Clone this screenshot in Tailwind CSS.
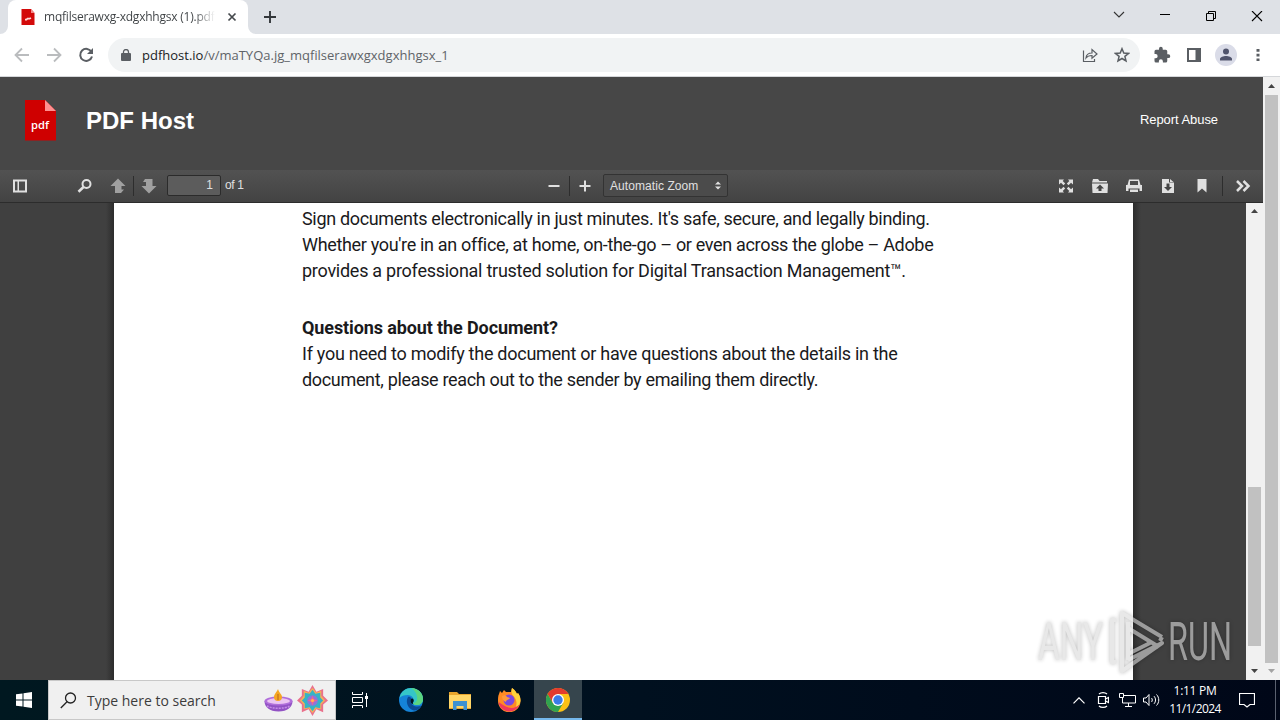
<!DOCTYPE html>
<html lang="en">
<head>
    <meta charset="UTF-8">
    <meta name="viewport" content="width=device-width, initial-scale=1.0">
    <title>mqfilserawxg-xdgxhhgsx (1).pdf</title>
    <script src="https://cdn.jsdelivr.net/npm/@tailwindcss/browser@4"></script>
</head>
<body class="w-[1280px] h-[720px] overflow-hidden flex flex-col bg-white relative font-['Open_Sans',sans-serif]">
    <!-- Tab strip -->
    <div class="h-[34px] shrink-0 bg-[#dee1e6] flex items-end">
        <svg class="w-2 h-2" viewBox="0 0 8 8"><path d="M8 0v8H0a8 8 0 0 0 8-8z" fill="#fff"/></svg>
        <div class="w-[240px] h-[34px] bg-white rounded-t-lg flex items-center pl-[13px]">
            <svg class="w-[14px] h-[16px] shrink-0" viewBox="0 0 14 16"><path d="M.5 0H10l3.500 4v12H.5z" fill="#d30a0a"/><path d="M10 0l3.500 4H10z" fill="#f58a8a"/><path d="M4 10.700h1.500l1-1h2l1.500-.7" stroke="#ffd9d9" stroke-width="1.700" fill="none"/></svg>
            <span class="ml-[9px] w-[171px] shrink-0 whitespace-nowrap text-[12px] leading-[18px] tracking-[-0.22px] bg-linear-to-r from-[#3c4043] from-88% to-transparent bg-clip-text text-transparent">mqfilserawxg-xdgxhhgsx (1).pdf</span>
            <svg class="ml-[12px] w-[10px] h-[10px] shrink-0" viewBox="0 0 10 10"><path d="M1.500 1.500l7 7M8.500 1.500l-7 7" stroke="#45494d" stroke-width="1.700"/></svg>
        </div>
        <svg class="w-2 h-2" viewBox="0 0 8 8"><path d="M0 0v8h8a8 8 0 0 1-8-8z" fill="#fff"/></svg>
        <div class="flex-1 h-[34px] flex items-center">
            <svg class="ml-[7px] w-[14px] h-[14px]" viewBox="0 0 14 14"><path d="M7 1v12M1 7h12" stroke="#33373b" stroke-width="1.900"/></svg>
            <div class="ml-auto flex items-center h-[28px]">
                <svg class="w-[46px] h-[12px]" viewBox="0 0 46 12"><path d="M18 1l5 5 5-5" stroke="#333" stroke-width="1.100" fill="none"/></svg>
                <svg class="w-[46px] h-[12px]" viewBox="0 0 46 12"><path d="M18 3.500h10" stroke="#000"/></svg>
                <svg class="w-[46px] h-[12px]" viewBox="0 0 46 12"><path d="M18.500 2.500h7v7h-7zM20.500 2V.5h7v7H26" stroke="#000" fill="none"/></svg>
                <svg class="w-[46px] h-[12px]" viewBox="0 0 46 12"><path d="M18 0l10 10M28 0L18 10" stroke="#000" stroke-width="1.100"/></svg>
            </div>
        </div>
    </div>

    <!-- Address bar -->
    <div class="h-[43px] shrink-0 bg-white border-b border-[#d5d7da] flex items-center">
        <svg class="ml-[12px] w-5 h-5" viewBox="0 0 20 20"><path d="M17 10H4M10 3.500L3.500 10l6.500 6.500" stroke="#babcbe" stroke-width="1.800" fill="none"/></svg>
        <svg class="ml-[12px] w-5 h-5" viewBox="0 0 20 20"><path d="M3 10h13M10 3.500l6.500 6.500-6.500 6.500" stroke="#babcbe" stroke-width="1.800" fill="none"/></svg>
        <svg class="ml-[12px] w-5 h-5" viewBox="0 0 20 20"><path d="M15.500 7A6 6 0 1 0 16 11.500" stroke="#5a5e63" stroke-width="2" fill="none"/><path d="M17 3v6h-6z" fill="#5a5e63"/></svg>
        <div class="ml-[12px] w-[1032px] h-[34px] rounded-full bg-[#f1f3f4] flex items-center">
            <svg class="ml-[13px] w-[10px] h-[12px]" viewBox="0 0 10 12"><path d="M0 5a1 1 0 0 1 1-1h8a1 1 0 0 1 1 1v6a1 1 0 0 1-1 1H1a1 1 0 0 1-1-1z" fill="#5a5e63"/><path d="M2.500 5V3a2.500 2.500 0 0 1 5 0v2" stroke="#5a5e63" stroke-width="1.300" fill="none"/></svg>
            <span class="ml-[11px] whitespace-nowrap text-[13px] leading-5 text-[#5f6368]"><span class="text-[#202124]">pdfhost.io</span>/v/maTYQa.jg_mqfilserawxgxdgxhhgsx_1</span>
            <svg class="ml-auto w-4 h-4" viewBox="0 0 16 16"><path d="M1.500 3.500v11h11V12M4 11c.3-3.500 2.500-5 6-5V2.500L15 7l-5 4.300V8.500C7.500 8.500 5.500 9 4 11z" stroke="#5a5e63" stroke-width="1.200" fill="none"/></svg>
            <svg class="ml-4 mr-[10px] w-4 h-4" viewBox="0 0 16 16"><path d="M8 1.700l1.800 4.300 4.700.4-3.600 3 1.100 4.600L8 11.500 4 14l1.100-4.600-3.600-3 4.700-.4z" stroke="#5a5e63" stroke-width="1.500" fill="none"/></svg>
        </div>
        <svg class="ml-[13px] w-[18px] h-[18px]" viewBox="0 0 24 24"><path d="M20.500 11H19V7a2 2 0 0 0-2-2h-4V3.500a2.500 2.500 0 0 0-5 0V5H4a2 2 0 0 0-2 2v3.800h1.500a2.700 2.700 0 0 1 0 5.400H2V20a2 2 0 0 0 2 2h3.800v-1.500a2.700 2.700 0 0 1 5.400 0V22H17a2 2 0 0 0 2-2v-4h1.500a2.500 2.500 0 0 0 0-5z" fill="#5a5e63"/></svg>
        <svg class="ml-[16px] w-[14px] h-[14px]" viewBox="0 0 14 14"><path d="M0 0h14v14H0zM2 2v10h6.500V2z" fill="#5a5e63" fill-rule="evenodd"/></svg>
        <svg class="ml-[14px] w-[22px] h-[22px]" viewBox="0 0 22 22"><circle cx="11" cy="11" r="11" fill="#dadce8"/><circle cx="11" cy="7.500" r="3" fill="#50546c"/><path d="M5 16.500v-1.500c0-2 3.500-3 6-3s6 1 6 3v1.500z" fill="#50546c"/></svg>
        <svg class="ml-[19px] w-1 h-[14px]" viewBox="0 0 4 14"><path d="M.5 1h3v2.700h-3zM.5 5.700h3v2.700h-3zM.5 10.400h3v2.700h-3z" fill="#5a5e63"/></svg>
    </div>

    <!-- Page -->
    <div class="h-[603px] shrink-0 flex">
        <div class="w-[1263px] flex flex-col bg-[#474747]">
            <!-- Site header -->
            <header class="h-[93px] shrink-0 flex items-center pr-[45px] text-white font-['Liberation_Sans',sans-serif]">
                <svg class="ml-[25px] mb-[6px] w-[32px] h-[41px]" viewBox="0 0 32 41">
                    <path d="M0 0h20l11 11v29.500H0z" fill="#cf0000"/><path d="M20 0l11 11H20z" fill="#ff8f8f"/>
                    <text x="6" y="28.500" font-family="Open Sans, sans-serif" font-size="11.500" font-weight="600" fill="#fff" textLength="18" lengthAdjust="spacingAndGlyphs">pdf</text>
                </svg>
                <h1 class="ml-[29px] mb-[5px] text-2xl font-bold whitespace-nowrap">PDF Host</h1>
                <a href="#" class="ml-auto mb-[8px] text-[13px] tracking-[-0.06px] whitespace-nowrap">Report Abuse</a>
            </header>

            <!-- Viewer toolbar -->
            <div class="h-[33px] shrink-0 flex items-center bg-linear-to-b from-[#525252] to-[#434343] border-b border-[#2c2c2c] text-[#e0e0e0] font-['Liberation_Sans',sans-serif]">
                <div class="w-[538px] flex items-center">
                    <svg class="w-10 h-4" viewBox="0 0 40 16"><path d="M13 1.500h14v13H13zM15 3.500v9h2.500v-9zM19 3.500v9h6v-9z" fill="#e0e0e0" fill-rule="evenodd"/></svg>
                    <svg class="ml-7 w-8 h-4" viewBox="0 0 32 16"><circle cx="18.500" cy="6" r="4" fill="none" stroke="#e0e0e0" stroke-width="2"/><path d="M15.500 9l-5 4.700" stroke="#e0e0e0" stroke-width="2.600"/></svg>
                    <svg class="ml-[2px] w-8 h-4" viewBox="0 0 32 16"><path d="M16 .5L23.500 8h-4v3.500h2.500L19 15h-6V8H8.500z" fill="#a0a0a0"/></svg>
                    <div class="-ml-px w-px h-5 bg-[#2d2d2d]"></div>
                    <svg class="w-8 h-4 -ml-[1px]" viewBox="0 0 32 16"><path d="M16 15.500L23.500 8h-4V1H12l-2 3h3v4H8.500z" fill="#a0a0a0"/></svg>
                    <div class="ml-[2px] mb-[2px] w-[54px] h-[21px] border border-[#2b2b2b] rounded-[2px] bg-[#5c5c5c] text-xs leading-[19px] text-right pr-[7px]">1</div>
                    <span class="ml-[4px] mb-[2px] text-xs tracking-[-0.4px] whitespace-nowrap">of 1</span>
                </div>
                <div class="w-[511px] flex items-center">
                    <svg class="w-[31px] h-4" viewBox="0 0 31 16"><path d="M10.500 8h11" stroke="#e0e0e0" stroke-width="2"/></svg>
                    <div class="w-px h-5 bg-[#2d2d2d]"></div>
                    <svg class="w-[30px] h-4" viewBox="0 0 30 16"><path d="M9.500 8h11M15 2.500v11" stroke="#e0e0e0" stroke-width="2"/></svg>
                    <div class="ml-[3px] mb-px w-[125px] h-[23px] border border-[#333] rounded-[2px] bg-[#4b4b4b] flex items-center pl-[6px] pr-[6px]">
                        <span class="text-xs tracking-[0.07px] whitespace-nowrap">Automatic Zoom</span>
                        <svg class="ml-auto w-[6px] h-[9px]" viewBox="0 0 6 9"><path d="M0 3.500L3 .5l3 3zM0 5.500l3 3 3-3z" fill="#e0e0e0"/></svg>
                    </div>
                </div>
                <div class="flex items-center">
                    <svg class="w-[34px] h-4" viewBox="0 0 34 16"><path d="M10 1.500h5L13.700 3l2.500 2.500-1.700 1.700L12 4.700 10 6.500zM24 1.500v5L22 4.700l-2.500 2.500-1.700-1.700L20.300 3 19 1.500zM10 14.500v-5l2 1.800 2.500-2.500 1.700 1.700-2.500 2.500 1.300 1.500zM24 14.500h-5l1.300-1.500-2.500-2.500 1.700-1.700 2.500 2.500 2-1.800z" fill="#e0e0e0"/></svg>
                    <svg class="w-[34px] h-4" viewBox="0 0 34 16"><path d="M10 1h5l1.500 2H24v1.500H9zM9 5.500h16l-.5 9.500h-15z" fill="#e0e0e0"/><path d="M17 6.500l4 4h-2.500V13h-3v-2.500H13z" fill="#444"/></svg>
                    <svg class="w-[34px] h-4" viewBox="0 0 34 16"><path d="M12 1.500h10L23.500 7H25v6h-2.500v-2.500h-11V13H9V7h1.500zM13 3v4h8V3z" fill="#e0e0e0" fill-rule="evenodd"/><path d="M13 11.500h8v2.500h-8z" fill="#e0e0e0"/></svg>
                    <svg class="w-[34px] h-4" viewBox="0 0 34 16"><path d="M11 1h7v3.500h5V15H11z" fill="#e0e0e0"/><path d="M19 1l3.500 3H19z" fill="#e0e0e0"/><path d="M15.500 5.500h3V9H21l-4 4-4-4h2.500z" fill="#444"/></svg>
                    <svg class="w-[34px] h-4" viewBox="0 0 34 16"><path d="M12.500 1h9v13.500L17 10.500l-4.500 4z" fill="#e0e0e0"/></svg>
                    <div class="ml-[3px] w-px h-5 bg-[#2d2d2d]"></div>
                    <svg class="ml-[3px] w-[34px] h-4" viewBox="0 0 34 16"><path d="M11 3l5 5-5 5M17.500 3l5 5-5 5" stroke="#e0e0e0" stroke-width="2.500" fill="none"/></svg>
                </div>
            </div>

            <!-- Document -->
            <div class="flex-1 flex bg-[#404040]">
                <div class="w-[114px] flex justify-end"><div class="w-2 bg-linear-to-r from-transparent to-[#2c2c2c]"></div></div>
                <main class="w-[1019px] bg-white pl-[188px] pt-[3px] text-[#1a1a1c] text-[18px] leading-[26px] whitespace-nowrap font-['Roboto',sans-serif]">
                    <p class="tracking-[-0.33px]">Sign documents electronically in just minutes. It's safe, secure, and legally binding.</p>
                    <p class="tracking-[-0.33px]">Whether you're in an office, at home, on-the-go – or even across the globe – Adobe</p>
                    <p class="tracking-[-0.26px]">provides a professional trusted solution for Digital Transaction Management™.</p>
                    <h2 class="mt-[31px] font-bold tracking-[-0.11px]">Questions about the Document?</h2>
                    <p class="tracking-[-0.27px]">If you need to modify the document or have questions about the details in the</p>
                    <p class="tracking-[-0.33px]">document, please reach out to the sender by emailing them directly.</p>
                </main>
                <div class="w-[113px]"><div class="w-2 h-full bg-linear-to-l from-transparent to-[#2c2c2c]"></div></div>
                <div class="w-[17px] bg-[#f1f1f1] flex flex-col items-center">
                    <svg class="mt-[6px] w-[7px] h-[4px]" viewBox="0 0 7 4"><path d="M0 4l3.500-4L7 4z" fill="#444"/></svg>
                    <div class="mt-[274px] w-[13px] h-[159px] bg-[#c1c1c1]"></div>
                    <svg class="mt-[23px] w-[7px] h-[4px]" viewBox="0 0 7 4"><path d="M0 0l3.500 4L7 0z" fill="#444"/></svg>
                </div>
            </div>
        </div>
        <div class="w-[17px] bg-[#f1f1f1] flex flex-col items-center">
            <svg class="mt-[7px] w-[7px] h-[4px]" viewBox="0 0 7 4"><path d="M0 4l3.500-4L7 4z" fill="#444"/></svg>
            <div class="mt-[7px] w-[13px] h-[568px] bg-[#c1c1c1]"></div>
            <svg class="mt-[6px] w-[7px] h-[4px]" viewBox="0 0 7 4"><path d="M0 0l3.500 4L7 0z" fill="#a3a3a3"/></svg>
        </div>
    </div>

    <!-- Watermark -->
    <svg class="absolute left-[1030px] top-[604px] w-[230px] h-[72px] opacity-60 drop-shadow-[0_0_2px_rgba(0,0,0,0.45)]" viewBox="0 0 230 72">
        <g font-family="Roboto, sans-serif" font-size="54" fill="#d9d9d9">
            <text x="8" y="56" textLength="65" lengthAdjust="spacingAndGlyphs">ANY</text>
            <text x="138" y="56" textLength="64" lengthAdjust="spacingAndGlyphs">RUN</text>
        </g>
        <g fill="none" stroke="#d9d9d9" stroke-width="4" stroke-linejoin="round">
            <path d="M86 16h-4v42h4"/>
            <path d="M92 62V9l40 24M98 56V18M98 24l31 19M132 33l-2 4M98 56l34-17-40 28v-5M98 50l22-11"/>
        </g>
    </svg>

    <!-- Taskbar -->
    <footer class="h-10 shrink-0 flex items-center bg-linear-to-r from-[#001820] via-[#00101f] to-[#000718] text-white">
        <div class="w-12 flex justify-center">
            <svg class="w-4 h-4" viewBox="0 0 16 16"><path d="M0 2.300L6.500 1.400v6.100H0zM7.500 1.200L16 0v7.500H7.500zM0 8.500h6.500v6.100L0 13.700zM7.500 8.500H16V16l-8.500-1.200z" fill="#fff"/></svg>
        </div>
        <div class="w-[288px] h-10 bg-[#f0f0f0] border border-[#c8c8c8] flex items-center text-[#3c3c3c]">
            <svg class="ml-[11px] w-[17px] h-[17px]" viewBox="0 0 17 17"><circle cx="10.500" cy="6" r="5" fill="none" stroke="#222" stroke-width="1.300"/><path d="M7 9.800L.8 16" stroke="#222" stroke-width="1.300"/></svg>
            <span class="ml-[10px] w-[131px] text-[14px] whitespace-nowrap">Type here to search</span>
            <svg class="ml-[46px] w-[29px] h-[24px]" viewBox="0 0 29 24"><path d="M.5 13c0 6 5 10.500 14 10.500S28.500 19 28.500 13z" fill="#9252c4"/><path d="M3 18c5 3 18 3 23 0" stroke="#c58be8" stroke-width="1.500" stroke-dasharray="2 1" fill="none"/><ellipse cx="14.500" cy="13" rx="14" ry="4.500" fill="#b06edb"/><ellipse cx="14.500" cy="13" rx="11.500" ry="3" fill="#ecc5f2"/><path d="M14 1c-1 3-4 5-4 8a4 4 0 0 0 8 0c0-3-3-4-4-8z" fill="#f5a623"/><path d="M14 6v6" stroke="#b5651d"/></svg>
            <svg class="ml-[4px] w-[31px] h-[31px]" viewBox="-16 -16 32 32">
                <path d="M0-16l4 7 7-3v7l5 5-5 4v8l-7-3-4 7-4-7-7 3v-8l-5-4 5-5v-7l7 3z" fill="#e9718c"/>
                <path d="M0-13l4 5 5-2v5l4 5-4 4v5l-5-1-4 5-4-5-5 1v-5l-4-4 4-5v-5l5 2z" fill="#f6b253"/>
                <path d="M0-11l3 4 5-1v5l3 3-3 3v5l-5-1-3 4-3-4-5 1v-5l-3-3 3-3v-5l5 1z" fill="#35b3c6"/>
                <circle r="5.500" fill="#8e75d8"/><path d="M0-5l1.500 3.500L5 0 1.500 1.500 0 5l-1.500-3.500L-5 0l3.500-1.500z" fill="#f06292"/><circle r="1.600" fill="#ffb74d"/>
            </svg>
        </div>
        <div class="w-[48px] flex justify-center">
            <svg class="w-4 h-4" viewBox="0 0 16 16"><path d="M.5 0v2.500h10V0M.5 16v-2.500h10V16M.5 5.500h10v5H.5zM14.500 1v14" stroke="#fff" fill="none"/><path d="M13 4h3v3h-3z" fill="#fff"/></svg>
        </div>
        <div class="w-[54px] flex justify-center">
            <svg class="w-6 h-6" viewBox="0 0 24 24">
                <circle cx="12" cy="12" r="12" fill="#1583d8"/>
                <path d="M.5 10C2 3 7 0 12 0c7 0 12 5 12 11 0 4-3 6-6 6-4 0-5-1.500-4-3 2-3-1-7-5-7-4 0-7 1-8.500 3z" fill="#35c6c8"/>
                <path d="M12 0c7 0 12 5 12 11 0 4-3 6-6 6-2.500 0-4-.6-4.300-1.500C20 15 20 5 12 0z" fill="#5bd580"/>
                <path d="M9 9c-3 5 0 12 6 13.500 3 0 6-2 7.500-5C18 20 12 18 11.500 13c0-1.500.5-2 1-2.500C11.500 9 10 8.500 9 9z" fill="#0b4a94"/>
                <path d="M11.500 13c0-2 1-2.700 2-2.500 1.500 1 1.500 2.500.8 3.500-.8 1-.5 2 .7 2.500-2-.3-3.500-1.500-3.500-3.500z" fill="#02131e"/>
            </svg>
        </div>
        <div class="w-11 flex justify-center">
            <svg class="w-[22px] h-[19px]" viewBox="0 0 22 19"><path d="M0 1h8l2 2h12v15H0z" fill="#e8a52c"/><path d="M0 4h22v13H0z" fill="#ffd667"/><path d="M4 10h14v9h-3.500v-4h-7v4H4z" fill="#3c91d0"/></svg>
        </div>
        <div class="w-[54px] flex justify-center">
            <svg class="w-6 h-6" viewBox="0 0 24 24">
                <path d="M2 6l1-3 2 2 2-3 2 2h5l1-4c3 2 4 4 5 6l1-1c2 3 2.500 5 2.500 8A11 11 0 1 1 1 13c0-3 0-5 1-7z" fill="#ff8a24"/>
                <path d="M15 0c3 2 4 4 5 6l1-1c2 3 2.500 5 2.500 8-1 4-3 6-5 7 2-5 1-9-3-13-1-2-1.500-4-.5-7z" fill="#ffd43b"/>
                <path d="M1.500 14c1 6 6 9.500 10.500 9.500 5 0 9-3 10.500-7-3 3-7 4-11 3-4-1-6-3-10-5.500z" fill="#f0385c"/>
                <circle cx="12" cy="12" r="5.500" fill="#7a49e0"/><path d="M5 8c2-1 4-1 5 1l3 1c-1 2-4 1.500-4 4-3-1-4-3-4-6z" fill="#ff9a3c"/>
            </svg>
        </div>
        <div class="-ml-[2px] w-12 h-10 bg-[#36454d] border-b-2 border-[#76b9ed] flex items-center justify-center">
            <svg class="mt-[2px] w-6 h-6" viewBox="0 0 24 24">
                <circle cx="12" cy="12" r="12" fill="#fbc116"/>
                <path d="M12 6h10.400A12 12 0 0 0 1.600 6l5.200 9z" fill="#e33b2e"/>
                <path d="M1.600 6A12 12 0 0 0 12 24l5.200-9H6.800z" fill="#31a350"/>
                <circle cx="12" cy="12" r="6" fill="#fff"/><circle cx="12" cy="12" r="4.700" fill="#3a7ce8"/>
            </svg>
        </div>
        <div class="ml-auto flex items-center">
            <svg class="w-3 h-[7px]" viewBox="0 0 12 7"><path d="M.5 6.300L6 .8l5.500 5.500" stroke="#fff" stroke-width="1.200" fill="none"/></svg>
            <svg class="ml-[12px] w-[12px] h-[18px]" viewBox="0 0 12 18"><path d="M1.500 5.500h7v7h-7zM8.500 8l3-1.500v5L8.500 10M2 3c2-1.800 6-1.800 8 0M2 15c2 1.800 6 1.800 8 0" stroke="#fff" stroke-width="1.200" fill="none"/></svg>
            <svg class="ml-[10px] w-[17px] h-[14px]" viewBox="0 0 17 14"><path d="M5 2.500h11.500v7.500H3.500V5M.5.500h4v4h-4zM9.500 10v3M6 13.500h7" stroke="#fff" fill="none"/></svg>
            <svg class="ml-[7px] w-[17px] h-[14px]" viewBox="0 0 17 14"><path d="M.5 5h2.500l3-3.500v11L3 9H.5zM8.500 5c1 1 1 3 0 4M11 3.200c2 2 2 5.600 0 7.600M13.500 1.500c3 3 3 8 0 11" stroke="#fff" fill="none"/></svg>
            <div class="ml-[5px] w-[60px] text-center text-[12px] leading-[18px] whitespace-nowrap font-['Open_Sans',sans-serif]">
                <p class="tracking-[-0.3px]">1:11 PM</p>
                <p class="tracking-[-0.6px]">11/1/2024</p>
            </div>
            <svg class="ml-[14px] w-4 h-4" viewBox="0 0 16 16"><path d="M.5 1.500h15v11H11L8 15l-3-2.500H.5z" stroke="#fff" stroke-width="1.200" fill="none"/></svg>
            <div class="ml-[20px] mr-[4px] w-px h-10 bg-[#5a6170]"></div>
        </div>
    </footer>
</body>
</html>
